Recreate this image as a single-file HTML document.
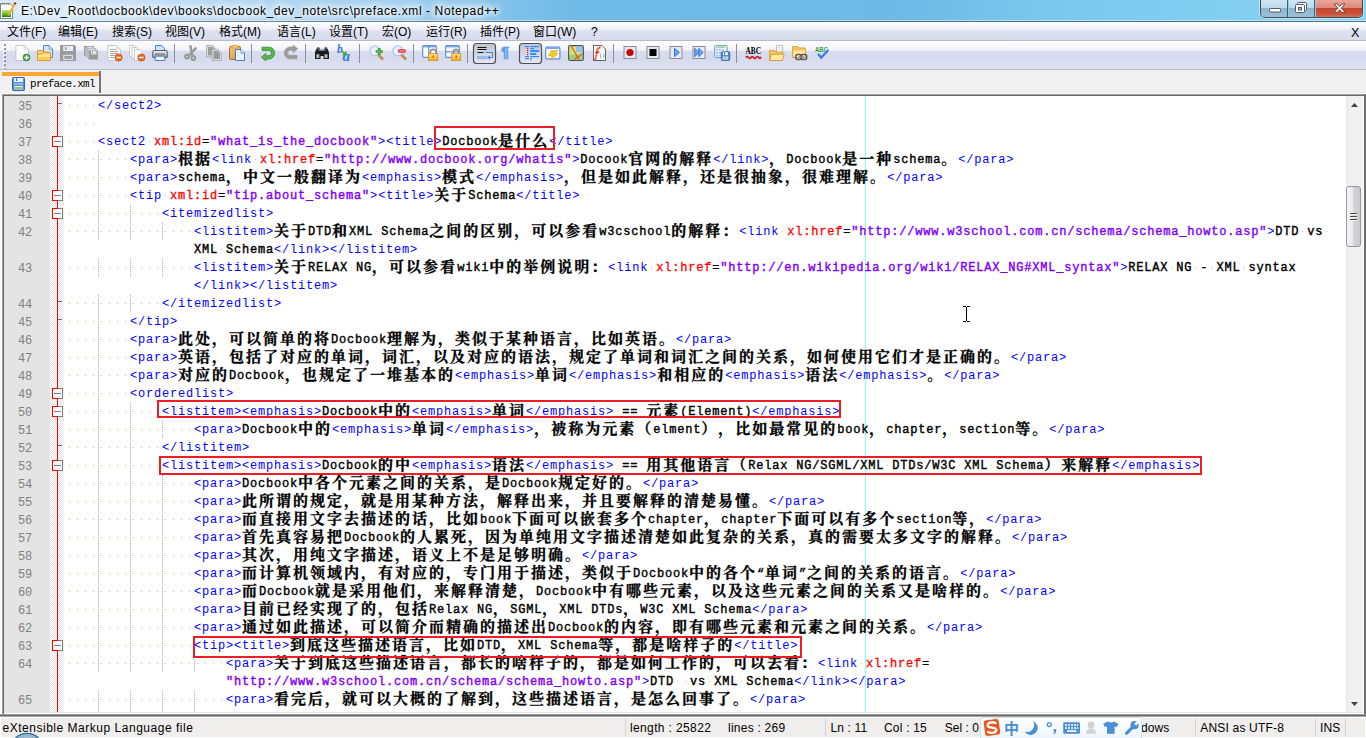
<!DOCTYPE html>
<html lang="zh-CN">
<head>
<meta charset="utf-8">
<title>E:\Dev_Root\docbook\dev\books\docbook_dev_note\src\preface.xml - Notepad++</title>
<style>
html,body{margin:0;padding:0;}
body{width:1366px;height:738px;overflow:hidden;position:relative;background:#fff;font-family:"Liberation Sans","Noto Sans CJK SC",sans-serif;font-size:12px;color:#000;}
div,span,i{box-sizing:border-box;}
.abs{position:absolute;}
/* title bar */
#title{position:absolute;left:0;top:0;width:1366px;height:21px;background:linear-gradient(90deg,#d6eafa 0,#d0e7f8 60px,#b7dbf4 200px,#9ccff0 400px,#80c2ea 500px,#70bae7 580px,#6fb9e6 900px,#7ac8ee 1050px,#82cef1 1200px,#88d2f2 1366px);}
#title .shine{position:absolute;left:0;top:0;width:1366px;height:21px;background:linear-gradient(180deg,rgba(255,255,255,.18) 0,rgba(255,255,255,0) 60%);}
#titleline{position:absolute;left:0;top:21px;width:1366px;height:1px;background:#4f6f86;}
#titletext{position:absolute;left:21px;top:2px;height:18px;line-height:18px;font-size:12px;letter-spacing:.596px;white-space:pre;color:#000;text-shadow:0 0 5px #fff,0 0 7px #fff,0 0 9px #fff,0 0 12px #fff,0 0 15px #fff,0 0 18px rgba(255,255,255,.9);}
/* window controls */
#ctl{position:absolute;left:1260px;top:0;width:103px;height:18px;border:1px solid #3d4d5c;border-top:none;border-radius:0 0 5px 5px;overflow:hidden;box-shadow:0 0 0 1px rgba(255,255,255,.45);}
#ctl div{position:absolute;top:0;height:17px;}
#cmin{left:0;width:27px;background:linear-gradient(180deg,#cfe6f3 0,#bcd9ea 47%,#8fb4cd 50%,#9dc0d7 100%);border-right:1px solid #4a5c6c;}
#cmax{left:28px;width:26px;background:linear-gradient(180deg,#cfe6f3 0,#bcd9ea 47%,#8fb4cd 50%,#9dc0d7 100%);border-right:1px solid #4a5c6c;}
#ccls{left:55px;width:46px;background:linear-gradient(180deg,#eaa79b 0,#dc8878 47%,#c7452d 50%,#c9513a 80%,#d4705a 100%);}
/* menu bar */
#menu{position:absolute;left:0;top:22px;width:1366px;height:18px;background:linear-gradient(180deg,#fdfdfe 0,#f1f3fa 35%,#dde1f0 50%,#d7dbed 100%);}
#menuline{position:absolute;left:0;top:40px;width:1366px;height:1px;background:#b6bbd0;}
#menu span{position:absolute;top:1px;height:18px;line-height:18px;font-size:12px;white-space:pre;}
/* toolbar */
#tb{position:absolute;left:0;top:41px;width:1366px;height:28px;background:linear-gradient(180deg,#fdfdfe 0,#f4f5fb 8px,#ebedf7 9.5px,#d9ddef 10.5px,#d6daee 18px,#dfe3f3 28px);}
#tbline{position:absolute;left:0;top:69px;width:1366px;height:1px;background:#b9bdd0;}
/* tab bar */
#tabbar{position:absolute;left:0;top:70px;width:1366px;height:24px;background:#f0f0f0;}
#tab{position:absolute;left:2px;top:71px;width:99px;height:22px;background:#f1f1f1;border-right:2px solid #747474;}
#tab .o{position:absolute;left:0;top:1px;width:97px;height:4px;background:#faa634;}
#tab .txt{position:absolute;left:28px;top:6px;height:14px;line-height:14px;font-family:"Liberation Mono","Noto Sans CJK SC",monospace;font-size:11px;letter-spacing:-.7px;white-space:pre;}
/* editor */
#edframe{position:absolute;left:2px;top:94px;width:1364px;height:623px;background:#fff;}
#lnm{position:absolute;left:4px;top:96px;width:46px;height:616px;background:#e4e4e4;}
#fm{position:absolute;left:50px;top:96px;width:14px;height:616px;background:repeating-conic-gradient(#e6e6e6 0 25%,#fff 0 50%) 0 0/2px 2px;}
#fl{position:absolute;left:57px;top:96px;width:1px;height:616px;background:#ff0000;}
.ln{position:absolute;left:4px;width:28.3px;height:18px;line-height:18px;margin-top:1.5px;text-align:right;font-family:"Liberation Mono",monospace;font-size:12px;color:#808080;}
.fb{position:absolute;left:52px;width:11px;height:11px;background:#f8f8f8;border:1px solid #808080;border-left-color:#ff0000;}
.fb:before{content:"";position:absolute;left:-1px;top:-1px;width:6px;height:1px;background:#ff0000;}
.fb:after{content:"";position:absolute;left:-1px;bottom:-1px;width:6px;height:1px;background:#ff0000;}
.fb i{position:absolute;left:1px;top:4px;width:7px;height:1px;background:#808080;}
.ft{position:absolute;left:58px;width:4px;height:1px;background:#707070;}
.g{position:absolute;width:1px;height:18px;background:linear-gradient(180deg,transparent 0,transparent 1px,#b0b0b0 1px,#b0b0b0 2px) 0 0/1px 2px;}
.r{position:absolute;height:18px;line-height:18px;white-space:pre;font-family:"Liberation Mono","Noto Serif CJK SC",monospace;font-size:12px;letter-spacing:.8px;color:#000;}
.r span{line-height:18px;}
.t{color:#0000ff;}
.a{color:#ff0000;-webkit-text-stroke:.3px #ff0000;}
.v{color:#8000ff;-webkit-text-stroke:.4px #8000ff;}
.e{color:#000;-webkit-text-stroke:.3px #000;}
.x{color:#000;font-weight:normal;-webkit-text-stroke:.4px #000;}
.c{font-family:"Noto Serif CJK SC","Noto Sans CJK SC",serif;font-size:15px;letter-spacing:2px;line-height:0 !important;font-weight:bold;position:relative;top:0.5px;text-spacing-trim:space-all;-webkit-text-stroke:.3px #000;font-kerning:none;font-variant-ligatures:none;}
.q{display:inline-block;width:8px;height:18px;vertical-align:top;overflow:hidden;}
.w{display:inline-block;height:18px;vertical-align:top;background:linear-gradient(90deg,transparent 0,transparent 3px,#ffb56a 3px,#ffb56a 4px,transparent 4px) 0 8px/8px 1px repeat-x;}
#edge{position:absolute;left:865px;top:96px;width:1px;height:616px;background:#8ff;}
.hl{position:absolute;border:2px solid #ee1c24;}
/* scrollbar */
#sb{position:absolute;left:1346px;top:96px;width:17px;height:616px;background:linear-gradient(90deg,#e8e8e8 0,#f0f0f0 20%,#f2f2f2 100%);}
#thumb{position:absolute;left:1346px;top:186px;width:15px;height:61px;border:1px solid #979797;border-radius:3px;background:linear-gradient(90deg,#f4f4f4 0,#e9e9eb 45%,#d6d6d9 50%,#c9c9ce 100%);}
/* status bar */
#status{position:absolute;left:1px;top:718px;width:1364px;height:19px;background:#f0eded;}
#status span{position:absolute;top:0;height:19px;line-height:20px;font-size:12px;white-space:pre;}
#status i{position:absolute;top:0;width:1px;height:19px;background:#d6d3d3;}
</style>
</head>
<body>
<div id="title"></div><div class="abs" style="left:0;top:20px;width:1366px;height:1px;background:rgba(255,255,255,.45)"></div>
<div id="titleline"></div>
<svg class="abs" style="left:0;top:2px" width="18" height="18" viewBox="0 0 18 18">
 <defs><linearGradient id="gg" x1="0" y1="0" x2="0" y2="1"><stop offset="0" stop-color="#cfe85a"/><stop offset=".55" stop-color="#6cc030"/><stop offset="1" stop-color="#1e7a1e"/></linearGradient></defs>
 <path d="M.5 1.5H10L12.5 4V16.5H.5z" fill="#fff" stroke="#808080" stroke-width="1"/>
 <path d="M1.5 2.5h8" stroke="#9a9a9a" stroke-width="1.4" stroke-dasharray="1.2 1"/>
 <rect x="2" y="8" width="9" height="7" fill="url(#gg)"/>
 <path d="M14.8 2L8.2 13.2" stroke="#f2b01c" stroke-width="2"/>
 <path d="M8.9 12l-1.5 2.4 2.4-1.2z" fill="#c89040"/>
 <rect x="14" y=".4" width="2.2" height="2" fill="#a80808" transform="rotate(30 15 1.4)"/>
</svg>
<div id="titletext">E:\Dev_Root\docbook\dev\books\docbook_dev_note\src\preface.xml - Notepad++</div>
<div id="ctl">
 <div id="cmin"></div><div id="cmax"></div><div id="ccls"></div>
 <svg class="abs" style="left:0;top:0" width="101" height="17" viewBox="0 0 101 17">
  <rect x="8.5" y="8.5" width="11" height="3.5" rx=".8" fill="#fff" stroke="#535b66" stroke-width="1"/>
  <rect x="36.5" y="2.5" width="9" height="8" rx="1" fill="#fff" stroke="#535b66"/>
  <rect x="34.5" y="4.5" width="9" height="8" rx="1" fill="#fff" stroke="#535b66"/>
  <rect x="37.5" y="7.5" width="3" height="2.5" fill="#9fb6c8" stroke="#535b66"/>
  <path d="M73.2 4 L76.4 4 L78.6 6.6 L80.8 4 L84 4 L80.3 8.2 L84.2 12.4 L80.9 12.4 L78.6 9.8 L76.3 12.4 L73 12.4 L76.9 8.2 Z" fill="#fff" stroke="#5f3a36" stroke-width=".9"/>
 </svg>
</div>
<div id="menu">
<span style="left:7px">文件(F)</span><span style="left:58px">编辑(E)</span><span style="left:112px">搜索(S)</span><span style="left:165px">视图(V)</span><span style="left:219px">格式(M)</span><span style="left:277px">语言(L)</span><span style="left:329px">设置(T)</span><span style="left:382px">宏(O)</span><span style="left:426px">运行(R)</span><span style="left:480px">插件(P)</span><span style="left:533px">窗口(W)</span><span style="left:591px">?</span><span style="left:1351px;top:2px;font-size:12.5px">X</span>
</div>
<div id="menuline"></div>
<div id="tb"></div>
<div id="tbline"></div>
<svg class="abs" style="left:0;top:41px" width="1366" height="28" viewBox="0 0 1366 28">
<defs><linearGradient id="gp" x1="0" y1="0" x2="0" y2="1"><stop offset="0" stop-color="#f4f4f4"/><stop offset="1" stop-color="#9c9c9c"/></linearGradient><linearGradient id="gc" x1="0" y1="0" x2="1" y2="1"><stop offset="0" stop-color="#f7cd8a"/><stop offset="1" stop-color="#d8872c"/></linearGradient><linearGradient id="gl" x1="0" y1="0" x2="0" y2="1"><stop offset="0" stop-color="#fde07a"/><stop offset="1" stop-color="#f0a820"/></linearGradient><linearGradient id="gb" x1="0" y1="0" x2="0" y2="1"><stop offset="0" stop-color="#c3c5cf"/><stop offset=".5" stop-color="#d3d6e2"/><stop offset="1" stop-color="#e6e8f2"/></linearGradient></defs>
<rect x="3" y="2" width="2" height="2" fill="#fff"/><rect x="4" y="3" width="2" height="2" fill="#9296ab"/>
<rect x="3" y="6" width="2" height="2" fill="#fff"/><rect x="4" y="7" width="2" height="2" fill="#9296ab"/>
<rect x="3" y="10" width="2" height="2" fill="#fff"/><rect x="4" y="11" width="2" height="2" fill="#9296ab"/>
<rect x="3" y="14" width="2" height="2" fill="#fff"/><rect x="4" y="15" width="2" height="2" fill="#9296ab"/>
<rect x="3" y="18" width="2" height="2" fill="#fff"/><rect x="4" y="19" width="2" height="2" fill="#9296ab"/>
<rect x="3" y="22" width="2" height="2" fill="#fff"/><rect x="4" y="23" width="2" height="2" fill="#9296ab"/>
<rect x="3" y="26" width="2" height="2" fill="#fff"/><rect x="4" y="27" width="2" height="2" fill="#9296ab"/>
<g transform="translate(15 4)"><path d="M.9 .5h8.4l4.2 4.2v10.8H.9z" fill="#fefefe" stroke="#c6c6c6"/><path d="M9.3 .7v4h4" fill="#ececec" stroke="#d2d2d2" stroke-width=".8"/><circle cx="11.5" cy="12.5" r="3.4" fill="#3d9e37" stroke="#2b7d29" stroke-width=".7"/><path d="M11.6 10.2v4.6M9.3 12.5h4.6" stroke="#fff" stroke-width="1.5"/></g>
<g transform="translate(37 4)"><path d="M6.5 .5h5.6l3.4 3.4v8.6h-9z" fill="#d6e8fc" stroke="#4a88d8"/><path d="M12 .8v3.3h3.3" fill="#eef5fe" stroke="#4a88d8" stroke-width=".8"/><path d="M.5 5.5h4.8l1.2 1.6h6.5v8.4H.5z" fill="#f6d27a" stroke="#e0962a"/><path d="M.5 9.2h3.5l1.3-1.4h8.2v7.7H.5z" fill="#fbe38f" stroke="#e0962a"/><path d="M1.3 12h11.5v2.8H1.3z" fill="#f7cd55"/></g>
<g transform="translate(60 4)"><path d="M0 0h14.5L16 1.5V16H0z" fill="#9b9b9b"/><rect x="3.2" y="1" width="9.8" height="5" fill="#e9ebf3"/><rect x="5" y="2" width="1.4" height="3" fill="#9b9b9b"/><rect x="3.2" y="9.8" width="9.8" height="5.2" fill="#dcdfec"/><rect x="4.4" y="11" width="7.4" height="2.8" fill="#9b9b9b"/></g>
<g transform="translate(84 4)"><g fill="#9b9b9b"><rect x="0" y="1" width="10" height="10"/><rect x="2" y="3" width="10.5" height="10" stroke="#e3e6f1" stroke-width=".8"/><rect x="4" y="5" width="10.5" height="10" stroke="#e3e6f1" stroke-width=".8"/></g><rect x="3.5" y="1.8" width="4.5" height="1" fill="#e9ebf3"/><rect x="5" y="3.9" width="5" height="1" fill="#e9ebf3"/><rect x="7" y="6" width="5.5" height="3.4" fill="#e3e6f1"/><rect x="8" y="6.8" width="1" height="2" fill="#9b9b9b"/></g>
<g transform="translate(107 4)"><path d="M.9 .5h8.4l4.2 4.2v10.8H.9z" fill="#fefefe" stroke="#c6c6c6"/><path d="M9.3 .7v4h4" fill="#ececec" stroke="#d2d2d2" stroke-width=".8"/><path d="M3 4.5h5.5M3 6.5h8M3 8.5h7.5M3 10.5h5M3 12.5h4.5" stroke="#9a9a9a" stroke-width=".9"/><circle cx="11.6" cy="12.5" r="3.6" fill="#e8671b" stroke="#c9500f" stroke-width=".7"/><path d="M9.4 12.5h4.4" stroke="#fff" stroke-width="1.5"/></g>
<g transform="translate(129 4)"><path d="M.5 .5h4.8l2.4 2.4v8.6H.5z" fill="#fefefe" stroke="#c9c9c9"/><path d="M3 2.5h4.8l2.4 2.4v8.6H3z" fill="#fefefe" stroke="#c9c9c9"/><path d="M5.5 4.5h4.8l2.9 2.9v8.1H5.5z" fill="#fefefe" stroke="#c9c9c9"/><circle cx="12.4" cy="12.5" r="3.6" fill="#e8671b" stroke="#c9500f" stroke-width=".7"/><path d="M10.2 12.5h4.4" stroke="#fff" stroke-width="1.5"/></g>
<g transform="translate(152 4)"><path d="M3.5 .5h6.2l2.8 2.8V8h-9z" fill="#cfe3fb" stroke="#3f83da"/><path d="M.8 6.8Q.8 5.5 2.2 5.5h11.6q1.4 0 1.4 1.3v5.7H.8z" fill="url(#gp)" stroke="#4a4a4a" stroke-width=".9"/><rect x="3" y="8.3" width="10" height="2.2" fill="#8d8d8d"/><path d="M3.2 11.2h9.6v4.3H3.2z" fill="#f6fafe" stroke="#3f83da"/></g>
<rect x="174" y="3" width="1" height="19" fill="#8b8c9e"/>
<g transform="translate(184 4)"><g fill="none" stroke="#999" stroke-width="2.4"><path d="M6.2 .3l2.2 10.5"/><path d="M12.4 2.6L5.2 10.2"/><circle cx="3" cy="11.6" r="1.9" stroke-width="2"/><circle cx="9.4" cy="13" r="1.9" stroke-width="2"/></g></g>
<g transform="translate(206 4)"><path d="M.5 .5h5.8l3.2 3.2v8.3h-9z" fill="#9b9b9b" stroke="#b4b4b4"/><path d="M1.5 1.5h4.4l2.6 2.6v6.9h-7z" fill="none" stroke="#eef0f6" stroke-width=".8"/><path d="M6 4.5h5.8l3.7 3.7v7.3H6z" fill="#9b9b9b" stroke="#b4b4b4"/><path d="M7 5.5h4.4l3.1 3.1v5.9H7z" fill="none" stroke="#eef0f6" stroke-width=".8"/></g>
<g transform="translate(229 4)"><rect x=".5" y="1.5" width="11" height="13" rx="1.2" fill="url(#gc)" stroke="#b06c1c"/><rect x="3" y=".3" width="6" height="2.6" rx=".8" fill="#fbd66e" stroke="#c98a22" stroke-width=".7"/><path d="M6.5 4.5h5.5l3.5 3.5v7.5h-9z" fill="#e8f1fd" stroke="#3f83da"/><path d="M12 4.8v3.4h3.4" fill="#fff" stroke="#3f83da" stroke-width=".8"/></g>
<rect x="251" y="3" width="1" height="19" fill="#8b8c9e"/>
<g transform="translate(261 4)"><path d="M1 2.2H7.8a5.9 5.9 0 0 1 0 11.8H4.8V15.8L.3 12.2 4.8 8.6v2.2H7.8a2.7 2.7 0 0 0 0 -5.4H1z" fill="#58b848" stroke="#2f8d2e" stroke-width=".8" stroke-linejoin="round"/></g>
<g transform="translate(284 4)"><g transform="rotate(180 7 8)"><path d="M1 2.2H7.8a5.9 5.9 0 0 1 0 11.8H4.8V15.8L.3 12.2 4.8 8.6v2.2H7.8a2.7 2.7 0 0 0 0 -5.4H1z" fill="#9b9b9b" stroke="#9b9b9b" stroke-width=".8" stroke-linejoin="round"/></g></g>
<rect x="305" y="3" width="1" height="19" fill="#8b8c9e"/>
<g transform="translate(314 4)"><path d="M2.5 3.5h3.5v2h4v-2h3.5l1.5 4v6.5h-5.5v-3h-3v3H1V7.5z" fill="#1d1d1d"/><path d="M3.2 2.3h2.2v1.5H3.2zM10.6 2.3h2.2v1.5h-2.2z" fill="#444"/><path d="M2.2 9.3h3.4v3.6H2.2zM10.4 9.3h3.4v3.6h-3.4z" fill="#8c8c8c"/><path d="M3.2 9.3h1v3.6h-1zM11.4 9.3h1v3.6h-1z" fill="#d8d8d8"/><path d="M4 5.2q4 -2 8 0" fill="none" stroke="#7aa7d8" stroke-width="1"/></g>
<g transform="translate(338 4)"><text x="-1" y="8" font-family="Liberation Serif,serif" font-style="italic" font-weight="bold" font-size="11.5" fill="#2f7be0">b</text><text x="4.5" y="15.8" font-family="Liberation Serif,serif" font-style="italic" font-weight="bold" font-size="15" fill="#2f7be0">a</text><path d="M3.8 6l3.6 3.4M7.8 6.6v3.2h-3.2" fill="none" stroke="#3aa33a" stroke-width="1.5"/></g>
<rect x="359" y="3" width="1" height="19" fill="#8b8c9e"/>
<g transform="translate(369 4)"><path d="M9 9.5l4.2 4.2" stroke="#b5792c" stroke-width="2.6" stroke-linecap="round"/><path d="M9.6 10.1l3.2 3.2" stroke="#e3b36a" stroke-width="1" stroke-linecap="round"/><circle cx="5.8" cy="5.8" r="5" fill="#dbe8fa" stroke="#a9c6ec" stroke-width="1.1"/><circle cx="5.8" cy="5.8" r="3.6" fill="#e9f1fc"/><path d="M10.2 3v7M6.7 6.5h7" stroke="#2f8f2f" stroke-width="2.6"/><path d="M10.2 3.8v5.4M7.5 6.5h5.4" stroke="#5cc04c" stroke-width="1.2"/></g>
<g transform="translate(392 4)"><path d="M9 9.5l4.2 4.2" stroke="#b5792c" stroke-width="2.6" stroke-linecap="round"/><path d="M9.6 10.1l3.2 3.2" stroke="#e3b36a" stroke-width="1" stroke-linecap="round"/><circle cx="5.8" cy="5.8" r="5" fill="#dbe8fa" stroke="#a9c6ec" stroke-width="1.1"/><circle cx="5.8" cy="5.8" r="3.6" fill="#e9f1fc"/><rect x="6.4" y="4.6" width="7" height="2.8" rx=".6" fill="#f03a3a" stroke="#d02020" stroke-width=".6"/><rect x="7.2" y="5.5" width="5.4" height="1" fill="#ffb0b0"/></g>
<rect x="413" y="3" width="1" height="19" fill="#8b8c9e"/>
<g transform="translate(422 4)"><rect x=".7" y=".7" width="13.6" height="11.6" rx="1" fill="#fff" stroke="#5a8edc" stroke-width="1.2"/><path d="M.7 1.6h13.6" stroke="#7aa6e6" stroke-width="1.6"/><path d="M6.8 1v11" stroke="#5a8edc" stroke-width="1.2"/><path d="M8.3 9V7.2a2.8 2.8 0 0 1 5.6 0V9" fill="none" stroke="#8f8f8f" stroke-width="1.7"/><rect x="6.5" y="8.6" width="9.2" height="7" fill="url(#gl)" stroke="#d9901c" stroke-width=".8"/><rect x="10.6" y="10.5" width="1.2" height="2.4" fill="#a86a10"/></g>
<g transform="translate(445 4)"><rect x=".7" y=".7" width="13.6" height="11.6" rx="1" fill="#fff" stroke="#5a8edc" stroke-width="1.2"/><path d="M.7 1.6h13.6" stroke="#7aa6e6" stroke-width="1.6"/><path d="M1 6.8h13" stroke="#5a8edc" stroke-width="1.2"/><path d="M8.3 9V7.2a2.8 2.8 0 0 1 5.6 0V9" fill="none" stroke="#8f8f8f" stroke-width="1.7"/><rect x="6.5" y="8.6" width="9.2" height="7" fill="url(#gl)" stroke="#d9901c" stroke-width=".8"/><rect x="10.6" y="10.5" width="1.2" height="2.4" fill="#a86a10"/></g>
<rect x="467" y="3" width="1" height="19" fill="#8b8c9e"/>
<rect x="473.5" y="2.5" width="22" height="20" rx="3" fill="url(#gb)" stroke="#4e4f58" stroke-width="1.2"/>
<g transform="translate(477 5)"><path d="M.5 1.5h9M.5 3.5h9M.5 6.5h6" stroke="#111" stroke-width="1.1"/><path d="M8.5 6.5h7v5h-3" fill="none" stroke="#3f83da" stroke-width="1"/><path d="M14.2 9.2l-2.6 2.3 2.6 2.3z" fill="#3f83da" transform="translate(-1.2 0)"/><rect x=".5" y="10.3" width="9.5" height="2.6" fill="#9cc3f5" stroke="#6aa5ee" stroke-width=".5"/></g>
<g transform="translate(499 4)"><text x="2" y="12.2" font-family="Liberation Sans,sans-serif" font-weight="bold" font-size="14.5" fill="#5b9df0" stroke="#5b9df0" stroke-width=".5">¶</text></g>
<rect x="519.5" y="2.5" width="22" height="20" rx="3" fill="url(#gb)" stroke="#4e4f58" stroke-width="1.2"/>
<g transform="translate(523.5 5)"><g fill="#2b90ff"><rect x="1.5" y="0" width="4" height="1.2"/><rect x="6.7" y="0" width="9" height="1.2"/><rect x="6.7" y="2" width="4" height="1.2"/><rect x="6.7" y="4" width="9" height="2"/><rect x="6.7" y="7" width="6" height="2"/><rect x="1.5" y="10" width="4" height="1.2"/><rect x="6.7" y="10" width="9" height="1.2"/><rect x="1.5" y="12" width="4" height="1.2"/><rect x="6.7" y="12" width="1.8" height="1.2"/><rect x="6.7" y="14" width="1" height="1"/></g><g fill="#f01010"><rect x="3.5" y="2" width="1.2" height="1.2"/><rect x="3.5" y="4" width="1.2" height="1.2"/><rect x="3.5" y="6" width="1.2" height="1.2"/><rect x="3.5" y="8" width="1.2" height="1.2"/></g></g>
<g transform="translate(545 5)"><rect x=".7" y="1.2" width="14.2" height="11.6" rx="1" fill="#fff" stroke="#5a8edc" stroke-width="1.2"/><path d="M.7 2.2h14.2" stroke="#7aa6e6" stroke-width="1.8"/><path d="M6 4.5h7l-3 3h3.3l-8 7 2-4.6H3.5z" fill="#f6c832" stroke="#e0a818" stroke-width=".6"/></g>
<g transform="translate(568 4)"><rect x=".7" y=".7" width="14.6" height="14.6" rx="1.4" fill="#dfe46a" stroke="#4d4f6b" stroke-width="1.3"/><rect x="8" y="1.5" width="6.6" height="6" fill="#8fc3f0"/><rect x="1.5" y="9.5" width="13" height="5" fill="#8fd470"/><rect x="1.5" y="1.5" width="3" height="8" fill="#cfe07a"/><path d="M3.5 1.5l7.5 13M14.5 8.5l-8 6" stroke="#f0503c" stroke-width="1.3"/></g>
<g transform="translate(591 4)"><path d="M2.5 .5h8.5l3.5 3.5v11.5h-12z" fill="#fffdf6" stroke="#666" stroke-width="1"/><path d="M9.5 2.8q-2.6 -.6 -3.2 2.4L4.6 13.5q-.6 1.6 -2.4 .8" fill="none" stroke="#ee2a2a" stroke-width="1.9" stroke-dasharray="1.3 .5"/><path d="M4.3 7.3h4" stroke="#ee2a2a" stroke-width="1.5"/><path d="M9.8 8.5q-1 2.2 0 4.6M12.6 8.5q1 2.2 0 4.6" fill="none" stroke="#8fb0d8" stroke-width="1"/></g>
<rect x="613" y="3" width="1" height="19" fill="#8b8c9e"/>
<g transform="translate(623 4)"><rect x="1" y="1.5" width="12" height="12" fill="#e6e9f6" stroke="#8e8e8e" stroke-width="1"/><circle cx="7" cy="7.5" r="3.6" fill="#c80000"/></g>
<g transform="translate(646 4)"><rect x="1" y="1.5" width="12" height="12" fill="#e6e9f6" stroke="#8e8e8e" stroke-width="1"/><rect x="3.5" y="4" width="7" height="7" fill="#000"/></g>
<g transform="translate(669 4)"><rect x="1" y="1.5" width="12" height="12" fill="#e6e9f6" stroke="#8e8e8e" stroke-width="1"/><path d="M5.5 3.4l5 4.1-5 4.1z" fill="#6fa8f0" stroke="#2f74d8" stroke-width="1"/></g>
<g transform="translate(692 4)"><rect x="1" y="1.5" width="12" height="12" fill="#e6e9f6" stroke="#8e8e8e" stroke-width="1"/><path d="M2.8 3.4l4.2 4.1-4.2 4.1zM6.8 3.4l4.4 4.1-4.4 4.1z" fill="#6fa8f0" stroke="#2f74d8" stroke-width="1"/></g>
<g transform="translate(714 4)"><rect x=".6" y=".6" width="12.6" height="12" rx=".8" fill="#eef4fd" stroke="#6c9be0" stroke-width="1"/><path d="M2 2.2h9" stroke="#8fd36a" stroke-width="1.2"/><g fill="#9bbcec"><rect x="2" y="4.2" width="2" height="1.6"/><rect x="5" y="4.2" width="2" height="1.6"/><rect x="8" y="4.2" width="2" height="1.6"/><rect x="2" y="7" width="2" height="1.6"/><rect x="5" y="7" width="2" height="1.6"/><rect x="2" y="9.8" width="2" height="1.6"/><rect x="5" y="9.8" width="2" height="1.6"/></g><rect x="7.3" y="6.8" width="8.4" height="8.6" rx=".8" fill="#4f86d6" stroke="#2a5cae" stroke-width=".8"/><rect x="9" y="7.3" width="5" height="2.8" fill="#eef4fd"/><rect x="10" y="7.8" width="1" height="1.8" fill="#2a5cae"/><rect x="8.8" y="11.6" width="5.4" height="3" fill="#eef4fd"/><rect x="9.6" y="12.4" width="3.8" height="1.4" fill="#8cc95a"/></g>
<rect x="736" y="3" width="1" height="19" fill="#8b8c9e"/>
<g transform="translate(745.5 4)"><text x="0" y="8.5" font-family="Liberation Serif,serif" font-weight="bold" font-size="9.5" fill="#000" textLength="15.5" lengthAdjust="spacingAndGlyphs">ABC</text><path d="M.3 12.6q1.3 -2 2.6 0t2.6 0 2.6 0 2.6 0 2.6 0 2 -.8" fill="none" stroke="#e02020" stroke-width="1.8"/></g>
<g transform="translate(769 4)"><path d="M7.5 .5h6.2v8h-6.2z" fill="#fdfdfd" stroke="#b5b5b5" stroke-width=".9"/><path d="M9 2.5h3.4M9 4.2h3.4" stroke="#c5c5c5" stroke-width=".7"/><path d="M.6 5.5h5l1.2 1.5h6.6v8.5H.6z" fill="#f4c866" stroke="#dd9a2a" stroke-width=".9"/><path d="M.6 15.5l1.8-6.3h12.8l-1.8 6.3z" fill="#fde7a3" stroke="#dd9a2a" stroke-width=".9"/></g>
<g transform="translate(792 4)"><path d="M.6 1.5h5l1.2 1.5h6.6v9.5H.6z" fill="#f4c866" stroke="#dd9a2a" stroke-width=".9"/><path d="M1.3 5.5h11.4v6.3H1.3z" fill="#fde7a3"/><path d="M2.5 4.2h4" stroke="#f7a65a" stroke-width="1"/><rect x="3.7" y="9.6" width="6" height="4.8" rx="2" fill="none" stroke="#5a5a5a" stroke-width="1.5"/><rect x="8.7" y="9.6" width="6" height="4.8" rx="2" fill="none" stroke="#5a5a5a" stroke-width="1.5"/><path d="M6.5 12h5.5" stroke="#8a8a8a" stroke-width="1.4"/></g>
<g transform="translate(813.5 4)"><text x="1.5" y="7" font-family="Liberation Sans,sans-serif" font-weight="bold" font-size="7.8" fill="#3a9a3a" textLength="13" lengthAdjust="spacingAndGlyphs">ABC</text><path d="M4.5 9l3.2 3.6L14.8 5" fill="none" stroke="#2f7fe0" stroke-width="2.2"/></g>
</svg>
<div id="tabbar"></div>
<div id="tab"><div class="o"></div>
 <svg class="abs" style="left:10px;top:6px" width="13" height="14" viewBox="0 0 13 14">
  <rect x=".5" y=".5" width="12" height="13" rx="1" fill="#5b8fd6" stroke="#2f62b0"/>
  <rect x="2" y="1" width="9" height="4" fill="#eef4fc"/>
  <rect x="4" y="1.5" width="1.2" height="2.5" fill="#2f62b0"/>
  <rect x="2" y="6" width="9" height="2" fill="#8db5ea"/>
  <rect x="2.5" y="9" width="8" height="3.5" fill="#eef4fc"/>
  <rect x="3" y="10" width="7" height="2" fill="#8cc95a"/>
 </svg>
 <div class="txt">preface.xml</div>
</div>
<div id="edframe"></div>
<div class="abs" style="left:0;top:93px;width:1366px;height:1px;background:#fcfcfc"></div>
<div class="abs" style="left:2px;top:94px;width:1364px;height:1px;background:#a0a0a0"></div>
<div class="abs" style="left:2px;top:95px;width:1362px;height:1px;background:#696969"></div>
<div class="abs" style="left:2px;top:94px;width:1px;height:620px;background:#a0a0a0"></div>
<div class="abs" style="left:3px;top:95px;width:1px;height:619px;background:#696969"></div>
<div class="abs" style="left:1364px;top:94px;width:2px;height:623px;background:#6d6d6d"></div>
<div class="abs" style="left:0;top:714px;width:1366px;height:1px;background:#9c9c9c"></div><div class="abs" style="left:0;top:715px;width:1366px;height:1px;background:#696969"></div><div class="abs" style="left:0;top:716px;width:1366px;height:1px;background:#a6a6a6"></div>
<div class="abs" style="left:4px;top:712px;width:1359px;height:1px;background:#e3e3e3"></div>
<div id="lnm"></div>
<div id="fm"></div>
<div id="fl"></div>
<div id="edge"></div>
<div class="ln" style="top:96px">35</div>
<div class="ft" style="top:103px"></div>
<div class="r" style="top:97px;left:66px"><span class="w">    </span><span class="t">&lt;/sect2&gt;</span></div>
<div class="ln" style="top:114px">36</div>
<div class="r" style="top:115px;left:66px"><span class="w">    </span></div>
<div class="ln" style="top:132px">37</div>
<div class="fb" style="top:136px"><i></i></div>
<div class="r" style="top:133px;left:66px"><span class="w">    </span><span class="t">&lt;sect2</span><span class="w"> </span><span class="a">xml:id</span><span class="e">=</span><span class="v">"what_is_the_docbook"</span><span class="t">&gt;</span><span class="t">&lt;title&gt;</span><span class="x">Docbook<span class="c">是什么</span></span><span class="t">&lt;/title&gt;</span></div>
<div class="ln" style="top:150px">38</div>
<div class="g" style="left:98px;top:150px"></div>
<div class="r" style="top:151px;left:66px"><span class="w">        </span><span class="t">&lt;para&gt;</span><span class="x"><span class="c">根据</span></span><span class="t">&lt;link</span><span class="w"> </span><span class="a">xl:href</span><span class="e">=</span><span class="v">"http://www.docbook.org/whatis"</span><span class="t">&gt;</span><span class="x">Docook<span class="c">官网的解释</span></span><span class="t">&lt;/link&gt;</span><span class="x"><span class="c">，</span>Docbook<span class="c">是一种</span>schema<span class="c">。</span></span><span class="t">&lt;/para&gt;</span></div>
<div class="ln" style="top:168px">39</div>
<div class="g" style="left:98px;top:168px"></div>
<div class="r" style="top:169px;left:66px"><span class="w">        </span><span class="t">&lt;para&gt;</span><span class="x">schema<span class="c">，中文一般翻译为</span></span><span class="t">&lt;emphasis&gt;</span><span class="x"><span class="c">模式</span></span><span class="t">&lt;/emphasis&gt;</span><span class="x"><span class="c">，但是如此解释，还是很抽象，很难理解。</span></span><span class="t">&lt;/para&gt;</span></div>
<div class="ln" style="top:186px">40</div>
<div class="fb" style="top:190px"><i></i></div>
<div class="g" style="left:98px;top:186px"></div>
<div class="r" style="top:187px;left:66px"><span class="w">        </span><span class="t">&lt;tip</span><span class="w"> </span><span class="a">xml:id</span><span class="e">=</span><span class="v">"tip.about_schema"</span><span class="t">&gt;</span><span class="t">&lt;title&gt;</span><span class="x"><span class="c">关于</span>Schema</span><span class="t">&lt;/title&gt;</span></div>
<div class="ln" style="top:204px">41</div>
<div class="fb" style="top:208px"><i></i></div>
<div class="g" style="left:98px;top:204px"></div>
<div class="g" style="left:130px;top:204px"></div>
<div class="r" style="top:205px;left:66px"><span class="w">            </span><span class="t">&lt;itemizedlist&gt;</span></div>
<div class="ln" style="top:222px">42</div>
<div class="g" style="left:98px;top:222px"></div>
<div class="g" style="left:130px;top:222px"></div>
<div class="g" style="left:162px;top:222px"></div>
<div class="r" style="top:223px;left:66px"><span class="w">                </span><span class="t">&lt;listitem&gt;</span><span class="x"><span class="c">关于</span>DTD<span class="c">和</span>XML</span><span class="w"> </span><span class="x">Schema<span class="c">之间的区别，可以参看</span>w3cschool<span class="c">的解释：</span></span><span class="t">&lt;link</span><span class="w"> </span><span class="a">xl:href</span><span class="e">=</span><span class="v">"http://www.w3school.com.cn/schema/schema_howto.asp"</span><span class="t">&gt;</span><span class="x">DTD</span><span class="w"> </span><span class="x">vs</span><span class="w"> </span></div>
<div class="r" style="top:241px;left:194px"><span class="x">XML</span><span class="w"> </span><span class="x">Schema</span><span class="t">&lt;/link&gt;</span><span class="t">&lt;/listitem&gt;</span></div>
<div class="ln" style="top:258px">43</div>
<div class="g" style="left:98px;top:258px"></div>
<div class="g" style="left:130px;top:258px"></div>
<div class="g" style="left:162px;top:258px"></div>
<div class="r" style="top:259px;left:66px"><span class="w">                </span><span class="t">&lt;listitem&gt;</span><span class="x"><span class="c">关于</span>RELAX</span><span class="w"> </span><span class="x">NG<span class="c">，可以参看</span>wiki<span class="c">中的举例说明：</span></span><span class="t">&lt;link</span><span class="w"> </span><span class="a">xl:href</span><span class="e">=</span><span class="v">"http://en.wikipedia.org/wiki/RELAX_NG#XML_syntax"</span><span class="t">&gt;</span><span class="x">RELAX</span><span class="w"> </span><span class="x">NG</span><span class="w"> </span><span class="x">-</span><span class="w"> </span><span class="x">XML</span><span class="w"> </span><span class="x">syntax</span></div>
<div class="r" style="top:277px;left:194px"><span class="t">&lt;/link&gt;</span><span class="t">&lt;/listitem&gt;</span></div>
<div class="ln" style="top:294px">44</div>
<div class="ft" style="top:301px"></div>
<div class="g" style="left:98px;top:294px"></div>
<div class="g" style="left:130px;top:294px"></div>
<div class="r" style="top:295px;left:66px"><span class="w">            </span><span class="t">&lt;/itemizedlist&gt;</span></div>
<div class="ln" style="top:312px">45</div>
<div class="ft" style="top:319px"></div>
<div class="g" style="left:98px;top:312px"></div>
<div class="r" style="top:313px;left:66px"><span class="w">        </span><span class="t">&lt;/tip&gt;</span></div>
<div class="ln" style="top:330px">46</div>
<div class="g" style="left:98px;top:330px"></div>
<div class="r" style="top:331px;left:66px"><span class="w">        </span><span class="t">&lt;para&gt;</span><span class="x"><span class="c">此处，可以简单的将</span>Docbook<span class="c">理解为，类似于某种语言，比如英语。</span></span><span class="t">&lt;/para&gt;</span></div>
<div class="ln" style="top:348px">47</div>
<div class="g" style="left:98px;top:348px"></div>
<div class="r" style="top:349px;left:66px"><span class="w">        </span><span class="t">&lt;para&gt;</span><span class="x"><span class="c">英语，包括了对应的单词，词汇，以及对应的语法，规定了单词和词汇之间的关系，如何使用它们才是正确的。</span></span><span class="t">&lt;/para&gt;</span></div>
<div class="ln" style="top:366px">48</div>
<div class="g" style="left:98px;top:366px"></div>
<div class="r" style="top:367px;left:66px"><span class="w">        </span><span class="t">&lt;para&gt;</span><span class="x"><span class="c">对应的</span>Docbook<span class="c">，也规定了一堆基本的</span></span><span class="t">&lt;emphasis&gt;</span><span class="x"><span class="c">单词</span></span><span class="t">&lt;/emphasis&gt;</span><span class="x"><span class="c">和相应的</span></span><span class="t">&lt;emphasis&gt;</span><span class="x"><span class="c">语法</span></span><span class="t">&lt;/emphasis&gt;</span><span class="x"><span class="c">。</span></span><span class="t">&lt;/para&gt;</span></div>
<div class="ln" style="top:384px">49</div>
<div class="fb" style="top:388px"><i></i></div>
<div class="g" style="left:98px;top:384px"></div>
<div class="r" style="top:385px;left:66px"><span class="w">        </span><span class="t">&lt;orderedlist&gt;</span></div>
<div class="ln" style="top:402px">50</div>
<div class="fb" style="top:406px"><i></i></div>
<div class="g" style="left:98px;top:402px"></div>
<div class="g" style="left:130px;top:402px"></div>
<div class="r" style="top:403px;left:66px"><span class="w">            </span><span class="t">&lt;listitem&gt;</span><span class="t">&lt;emphasis&gt;</span><span class="x">Docbook<span class="c">中的</span></span><span class="t">&lt;emphasis&gt;</span><span class="x"><span class="c">单词</span></span><span class="t">&lt;/emphasis&gt;</span><span class="w"> </span><span class="x">==</span><span class="w"> </span><span class="x"><span class="c">元素</span>(Element)</span><span class="t">&lt;/emphasis&gt;</span></div>
<div class="ln" style="top:420px">51</div>
<div class="g" style="left:98px;top:420px"></div>
<div class="g" style="left:130px;top:420px"></div>
<div class="g" style="left:162px;top:420px"></div>
<div class="r" style="top:421px;left:66px"><span class="w">                </span><span class="t">&lt;para&gt;</span><span class="x">Docbook<span class="c">中的</span></span><span class="t">&lt;emphasis&gt;</span><span class="x"><span class="c">单词</span></span><span class="t">&lt;/emphasis&gt;</span><span class="x"><span class="c">，被称为元素（</span>elment<span class="c">），比如最常见的</span>book<span class="c">，</span>chapter<span class="c">，</span>section<span class="c">等。</span></span><span class="t">&lt;/para&gt;</span></div>
<div class="ln" style="top:438px">52</div>
<div class="ft" style="top:445px"></div>
<div class="g" style="left:98px;top:438px"></div>
<div class="g" style="left:130px;top:438px"></div>
<div class="r" style="top:439px;left:66px"><span class="w">            </span><span class="t">&lt;/listitem&gt;</span></div>
<div class="ln" style="top:456px">53</div>
<div class="fb" style="top:460px"><i></i></div>
<div class="g" style="left:98px;top:456px"></div>
<div class="g" style="left:130px;top:456px"></div>
<div class="r" style="top:457px;left:66px"><span class="w">            </span><span class="t">&lt;listitem&gt;</span><span class="t">&lt;emphasis&gt;</span><span class="x">Docbook<span class="c">的中</span></span><span class="t">&lt;emphasis&gt;</span><span class="x"><span class="c">语法</span></span><span class="t">&lt;/emphasis&gt;</span><span class="w"> </span><span class="x">==</span><span class="w"> </span><span class="x"><span class="c">用其他语言（</span>Relax</span><span class="w"> </span><span class="x">NG/SGML/XML</span><span class="w"> </span><span class="x">DTDs/W3C</span><span class="w"> </span><span class="x">XML</span><span class="w"> </span><span class="x">Schema<span class="c">）来解释</span></span><span class="t">&lt;/emphasis&gt;</span></div>
<div class="ln" style="top:474px">54</div>
<div class="g" style="left:98px;top:474px"></div>
<div class="g" style="left:130px;top:474px"></div>
<div class="g" style="left:162px;top:474px"></div>
<div class="r" style="top:475px;left:66px"><span class="w">                </span><span class="t">&lt;para&gt;</span><span class="x">Docbook<span class="c">中各个元素之间的关系，是</span>Docbook<span class="c">规定好的。</span></span><span class="t">&lt;/para&gt;</span></div>
<div class="ln" style="top:492px">55</div>
<div class="g" style="left:98px;top:492px"></div>
<div class="g" style="left:130px;top:492px"></div>
<div class="g" style="left:162px;top:492px"></div>
<div class="r" style="top:493px;left:66px"><span class="w">                </span><span class="t">&lt;para&gt;</span><span class="x"><span class="c">此所谓的规定，就是用某种方法，解释出来，并且要解释的清楚易懂。</span></span><span class="t">&lt;/para&gt;</span></div>
<div class="ln" style="top:510px">56</div>
<div class="g" style="left:98px;top:510px"></div>
<div class="g" style="left:130px;top:510px"></div>
<div class="g" style="left:162px;top:510px"></div>
<div class="r" style="top:511px;left:66px"><span class="w">                </span><span class="t">&lt;para&gt;</span><span class="x"><span class="c">而直接用文字去描述的话，比如</span>book<span class="c">下面可以嵌套多个</span>chapter<span class="c">，</span>chapter<span class="c">下面可以有多个</span>section<span class="c">等，</span></span><span class="t">&lt;/para&gt;</span></div>
<div class="ln" style="top:528px">57</div>
<div class="g" style="left:98px;top:528px"></div>
<div class="g" style="left:130px;top:528px"></div>
<div class="g" style="left:162px;top:528px"></div>
<div class="r" style="top:529px;left:66px"><span class="w">                </span><span class="t">&lt;para&gt;</span><span class="x"><span class="c">首先真容易把</span>Docbook<span class="c">的人累死，因为单纯用文字描述清楚如此复杂的关系，真的需要太多文字的解释。</span></span><span class="t">&lt;/para&gt;</span></div>
<div class="ln" style="top:546px">58</div>
<div class="g" style="left:98px;top:546px"></div>
<div class="g" style="left:130px;top:546px"></div>
<div class="g" style="left:162px;top:546px"></div>
<div class="r" style="top:547px;left:66px"><span class="w">                </span><span class="t">&lt;para&gt;</span><span class="x"><span class="c">其次，用纯文字描述，语义上不是足够明确。</span></span><span class="t">&lt;/para&gt;</span></div>
<div class="ln" style="top:564px">59</div>
<div class="g" style="left:98px;top:564px"></div>
<div class="g" style="left:130px;top:564px"></div>
<div class="g" style="left:162px;top:564px"></div>
<div class="r" style="top:565px;left:66px"><span class="w">                </span><span class="t">&lt;para&gt;</span><span class="x"><span class="c">而计算机领域内，有对应的，专门用于描述，类似于</span>Docbook<span class="c">中的各个</span><span class="q">“</span><span class="c">单词</span><span class="q">”</span><span class="c">之间的关系的语言。</span></span><span class="t">&lt;/para&gt;</span></div>
<div class="ln" style="top:582px">60</div>
<div class="g" style="left:98px;top:582px"></div>
<div class="g" style="left:130px;top:582px"></div>
<div class="g" style="left:162px;top:582px"></div>
<div class="r" style="top:583px;left:66px"><span class="w">                </span><span class="t">&lt;para&gt;</span><span class="x"><span class="c">而</span>Docbook<span class="c">就是采用他们，来解释清楚，</span>Docbook<span class="c">中有哪些元素，以及这些元素之间的关系又是啥样的。</span></span><span class="t">&lt;/para&gt;</span></div>
<div class="ln" style="top:600px">61</div>
<div class="g" style="left:98px;top:600px"></div>
<div class="g" style="left:130px;top:600px"></div>
<div class="g" style="left:162px;top:600px"></div>
<div class="r" style="top:601px;left:66px"><span class="w">                </span><span class="t">&lt;para&gt;</span><span class="x"><span class="c">目前已经实现了的，包括</span>Relax</span><span class="w"> </span><span class="x">NG<span class="c">，</span>SGML<span class="c">，</span>XML</span><span class="w"> </span><span class="x">DTDs<span class="c">，</span>W3C</span><span class="w"> </span><span class="x">XML</span><span class="w"> </span><span class="x">Schema</span><span class="t">&lt;/para&gt;</span></div>
<div class="ln" style="top:618px">62</div>
<div class="g" style="left:98px;top:618px"></div>
<div class="g" style="left:130px;top:618px"></div>
<div class="g" style="left:162px;top:618px"></div>
<div class="r" style="top:619px;left:66px"><span class="w">                </span><span class="t">&lt;para&gt;</span><span class="x"><span class="c">通过如此描述，可以简介而精确的描述出</span>Docbook<span class="c">的内容，即有哪些元素和元素之间的关系。</span></span><span class="t">&lt;/para&gt;</span></div>
<div class="ln" style="top:636px">63</div>
<div class="fb" style="top:640px"><i></i></div>
<div class="g" style="left:98px;top:636px"></div>
<div class="g" style="left:130px;top:636px"></div>
<div class="g" style="left:162px;top:636px"></div>
<div class="r" style="top:637px;left:66px"><span class="w">                </span><span class="t">&lt;tip&gt;</span><span class="t">&lt;title&gt;</span><span class="x"><span class="c">到底这些描述语言，比如</span>DTD<span class="c">，</span>XML</span><span class="w"> </span><span class="x">Schema<span class="c">等，都是啥样子的</span></span><span class="t">&lt;/title&gt;</span></div>
<div class="ln" style="top:654px">64</div>
<div class="g" style="left:98px;top:654px"></div>
<div class="g" style="left:130px;top:654px"></div>
<div class="g" style="left:162px;top:654px"></div>
<div class="g" style="left:194px;top:654px"></div>
<div class="r" style="top:655px;left:66px"><span class="w">                    </span><span class="t">&lt;para&gt;</span><span class="x"><span class="c">关于到底这些描述语言，都长的啥样子的，都是如何工作的，可以去看：</span></span><span class="t">&lt;link</span><span class="w"> </span><span class="a">xl:href</span><span class="e">=</span></div>
<div class="r" style="top:673px;left:226px"><span class="v">"http://www.w3school.com.cn/schema/schema_howto.asp"</span><span class="t">&gt;</span><span class="x">DTD</span><span class="w">  </span><span class="x">vs</span><span class="w"> </span><span class="x">XML</span><span class="w"> </span><span class="x">Schema</span><span class="t">&lt;/link&gt;</span><span class="t">&lt;/para&gt;</span></div>
<div class="ln" style="top:690px">65</div>
<div class="g" style="left:98px;top:690px"></div>
<div class="g" style="left:130px;top:690px"></div>
<div class="g" style="left:162px;top:690px"></div>
<div class="g" style="left:194px;top:690px"></div>
<div class="r" style="top:691px;left:66px"><span class="w">                    </span><span class="t">&lt;para&gt;</span><span class="x"><span class="c">看完后，就可以大概的了解到，这些描述语言，是怎么回事了。</span></span><span class="t">&lt;/para&gt;</span></div>
<div class="g" style="left:98px;top:708px;height:4px"></div>
<div class="g" style="left:130px;top:708px;height:4px"></div>
<div class="g" style="left:162px;top:708px;height:4px"></div>
<div class="g" style="left:194px;top:708px;height:4px"></div>
<div class="hl" style="left:434px;top:126px;width:121px;height:24px"></div>
<div class="hl" style="left:157px;top:400px;width:684px;height:18px"></div>
<div class="hl" style="left:159px;top:456px;width:1043px;height:19px"></div>
<div class="hl" style="left:193px;top:636px;width:609px;height:22px"></div>
<div id="sb"></div>
<div id="thumb"></div>
<svg class="abs" style="left:1346px;top:96px" width="17" height="616" viewBox="0 0 17 616">
 <path d="M5 11 L8.5 7 L12 11 Z" fill="#404040"/>
 <path d="M5 606 L8.5 610 L12 606 Z" fill="#404040"/>
 <path d="M4 117.5h7M4 120.5h7M4 123.5h7" stroke="#4a4a4a" stroke-width="1"/><path d="M4 118.5h7M4 121.5h7M4 124.5h7" stroke="#f6f6f6" stroke-width="1"/>
</svg>
<!-- mouse I-beam -->
<svg class="abs" style="left:962px;top:305px" width="9" height="18" viewBox="962 305 9 18" shape-rendering="crispEdges">
 <path d="M963 306.5h3M967 306.5h3M966.5 307v14M963 321.5h3M967 321.5h3" fill="none" stroke="#000" stroke-width="1"/>
</svg>
<div id="status">
<span style="left:1.5px;letter-spacing:.52px">eXtensible Markup Language file</span>
<i style="left:624px"></i><span style="left:629px;letter-spacing:.37px">length : 25822</span><span style="left:727px;letter-spacing:.24px">lines : 269</span>
<i style="left:824px"></i><span style="left:829.5px;letter-spacing:.14px">Ln : 11</span><span style="left:883px;letter-spacing:.2px">Col : 15</span><span style="left:943.7px;letter-spacing:.04px">Sel : 0</span>
<i style="left:1090px"></i><span style="left:1094px;letter-spacing:.1px">Dos\Windows</span>
<i style="left:1194px"></i><span style="left:1199.3px;letter-spacing:.18px">ANSI as UTF-8</span>
<i style="left:1314px"></i><span style="left:1319px;letter-spacing:.16px">INS</span>
<i style="left:1344px"></i>
</div>
<svg class="abs" style="left:10px;top:730px" width="34" height="8" viewBox="10 730 34 8"><defs><radialGradient id="go" cx=".5" cy=".6" r=".6"><stop offset="0" stop-color="#dfe9f1"/><stop offset="1" stop-color="#8fb0c9"/></radialGradient></defs><circle cx="27" cy="750" r="16.6" fill="url(#go)" stroke="#2f6d9a" stroke-width="1.3"/></svg>
<div class="abs" style="left:980px;top:717px;width:162px;height:21px;background:linear-gradient(180deg,#ffffff 0,#f7fbff 50%,#eef6fd 100%);border:1px solid #d3e0ee;border-bottom:none;border-radius:2px 2px 0 0"></div>
<svg class="abs" style="left:980px;top:717px" width="162" height="21" viewBox="0 0 162 21">
 <g transform="rotate(-8 12 11)"><rect x="4" y="2.2" width="16" height="16.6" rx="3" fill="#e9541a"/><rect x="4" y="2.2" width="16" height="16.6" rx="3" fill="none" stroke="#f8f8f8" stroke-width=".8"/><path d="M16.3 6.6C13 4.4 8 5 8 8.2c0 3 8 1.8 8 5 0 3.2-5.6 3.4-8.6 1.2" fill="none" stroke="#fff" stroke-width="2.3" stroke-linecap="round"/></g>
 <text x="24" y="17.2" font-family="Liberation Sans,'Noto Sans CJK SC',sans-serif" font-weight="bold" font-size="15" fill="#4a8fd6">中</text>
 <path d="M53 4.3A7 7 0 1 1 44.6 14.4A6.9 6.9 0 0 0 53 4.3z" fill="#4a8fd6"/>
 <circle cx="69.3" cy="7.6" r="2" fill="none" stroke="#4a8fd6" stroke-width="1.3"/>
 <path d="M73.4 12.8a1.6 1.6 0 0 1 3 .8q0 2.4 -2.6 3.8l-.5-.8q1.3-.9 1.3-1.9a1.5 1.5 0 0 1 -1.2 -1.9z" fill="#4a8fd6"/>
 <rect x="83.2" y="5.2" width="16.8" height="11.6" rx="1.4" fill="#4a8fd6"/>
 <g fill="#fff"><rect x="85.2" y="7.2" width="1.8" height="1.7"/><rect x="88.2" y="7.2" width="1.8" height="1.7"/><rect x="91.2" y="7.2" width="1.8" height="1.7"/><rect x="94.2" y="7.2" width="1.8" height="1.7"/><rect x="96.8" y="7.2" width="1.4" height="1.7"/><rect x="85.2" y="10.2" width="1.8" height="1.7"/><rect x="88.2" y="10.2" width="1.8" height="1.7"/><rect x="91.2" y="10.2" width="1.8" height="1.7"/><rect x="94.2" y="10.2" width="1.8" height="1.7"/><rect x="96.8" y="10.2" width="1.4" height="1.7"/><rect x="87" y="13.2" width="9.4" height="1.7"/></g>
 <circle cx="111" cy="8" r="3.4" fill="#d2d2d2"/><path d="M106 16.8q0-5.2 5-5.2t5 5.2z" fill="#d2d2d2"/>
 <path d="M127.6 4.4q3.3 2.2 6.6 0l4.2 2.6-1.9 3.2-1.9-1v7.6h-7.6v-7.6l-1.9 1-1.9-3.2z" fill="#4a8fd6"/>
 <path d="M146.6 16.2L153.6 9.4" stroke="#4a8fd6" stroke-width="3.2" stroke-linecap="round"/><circle cx="154.6" cy="8.2" r="4.1" fill="#4a8fd6"/><rect x="153.6" y="1.6" width="2.6" height="6" transform="rotate(45 154.9 8)" fill="#f9fcff"/>
</svg>

</body>
</html>
